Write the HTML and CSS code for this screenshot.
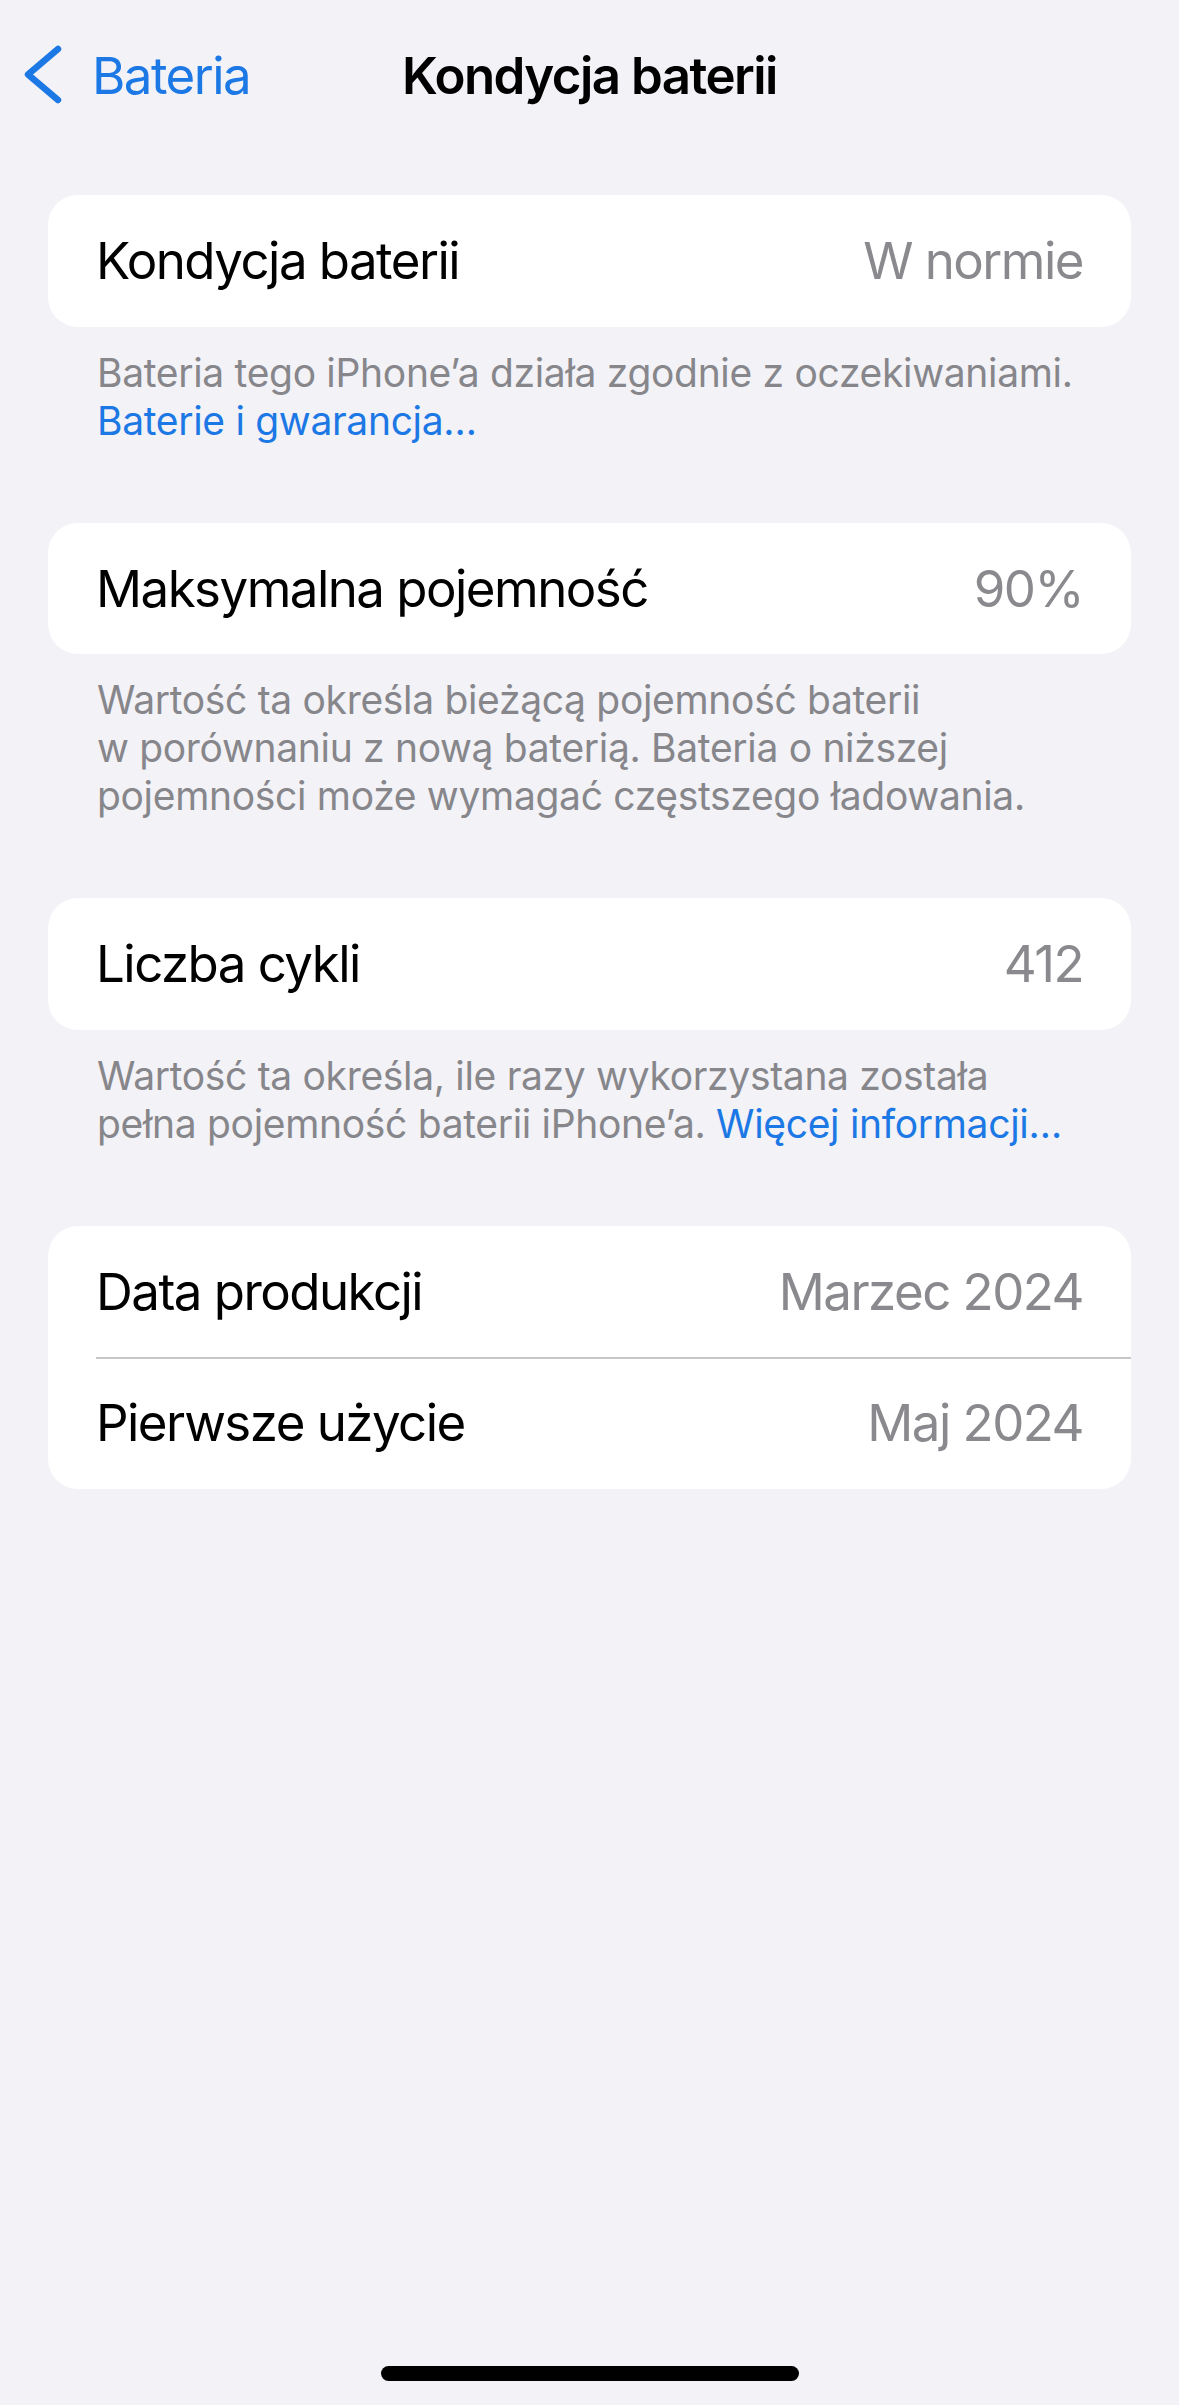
FILE: index.html
```html
<!DOCTYPE html>
<html lang="pl">
  <head>
    <meta charset="UTF-8" />
    <title>Kondycja baterii</title>
    <link rel="stylesheet" href="styles.css">
  </head>
  <body>
    <div class="navbar">
      <a class="back" href="#">
        <svg class="chevron" width="42" height="64" viewBox="0 0 42 64">
          <polyline points="38,6 8,31.5 38,57" />
        </svg>
        <span>Bateria</span>
      </a>
      <h1 class="title">Kondycja baterii</h1>
      <div></div>
    </div>

    <main class="list">
      <!-- kondycja -->
      <div class="group">
        <div class="row">
          <span class="label">Kondycja baterii</span>
          <span class="value">W normie</span>
        </div>
      </div>
      <p class="footer">
        Bateria tego iPhone’a działa zgodnie z oczekiwaniami.<br>
        <a href="#">Baterie i gwarancja…</a>
      </p>

      <!-- pojemnosc -->
      <div class="group">
        <div class="row">
          <span class="label">Maksymalna pojemność</span>
          <span class="value">90%</span>
        </div>
      </div>
      <p class="footer">
        Wartość ta określa bieżącą pojemność baterii<br>
        w porównaniu z nową baterią. Bateria o niższej<br>
        pojemności może wymagać częstszego ładowania.
      </p>

      <!-- cykle -->
      <div class="group">
        <div class="row">
          <span class="label">Liczba cykli</span>
          <span class="value">412</span>
        </div>
      </div>
      <p class="footer">
        Wartość ta określa, ile razy wykorzystana została<br>
        pełna pojemność baterii iPhone’a. <a href="#">Więcej informacji…</a>
      </p>

      <!-- daty -->
      <div class="group">
        <div class="row">
          <span class="label">Data produkcji</span>
          <span class="value">Marzec 2024</span>
        </div>
        <div class="row">
          <span class="label">Pierwsze użycie</span>
          <span class="value">Maj 2024</span>
        </div>
      </div>
    </main>

    <div class="home-indicator"></div>
  </body>
</html>
```

FILE: styles.css
```css
* {
  box-sizing: border-box;
}

body {
  margin: 0;
  min-height: 2405px;
  display: flex;
  flex-direction: column;
  background: #f2f2f7;
  font-family: Inter, "Noto Sans", sans-serif;
  color: #000;
  letter-spacing: -0.02em;
}

a {
  color: #1c78e4;
  text-decoration: none;
}

.navbar {
  height: 150px;
  display: grid;
  grid-template-columns: 1fr auto 1fr;
  align-items: center;
}

.back {
  display: flex;
  align-items: center;
  gap: 30px;
  padding-left: 20px;
  font-size: 51px;
  letter-spacing: -0.03em;
}

.chevron polyline {
  fill: none;
  stroke: #1c78e4;
  stroke-width: 6.5;
  stroke-linecap: round;
  stroke-linejoin: round;
}

.title {
  margin: 0;
  font-size: 51px;
  font-weight: 600;
  letter-spacing: -0.03em;
}

.list {
  margin-top: 45px;
  padding: 0 48px;
}

.group {
  background: #fff;
  border-radius: 30px;
  overflow: hidden;
}

.row {
  height: 131.5px;
  display: flex;
  justify-content: space-between;
  align-items: center;
  padding: 0 48px;
  font-size: 51px;
  letter-spacing: -0.03em;
  position: relative;
}

.row + .row::before {
  content: "";
  position: absolute;
  top: 0;
  left: 48px;
  right: 0;
  border-top: 2px solid #c6c6c8;
}

.value {
  color: #8a8a8e;
}

.footer {
  margin: 0 0 78px;
  padding: 22px 49px 0;
  font-size: 39px;
  line-height: 48px;
  color: #86868b;
  white-space: nowrap;
}

.home-indicator {
  margin: auto auto 24px;
  width: 418px;
  height: 15px;
  border-radius: 8px;
  background: #000;
}
```
